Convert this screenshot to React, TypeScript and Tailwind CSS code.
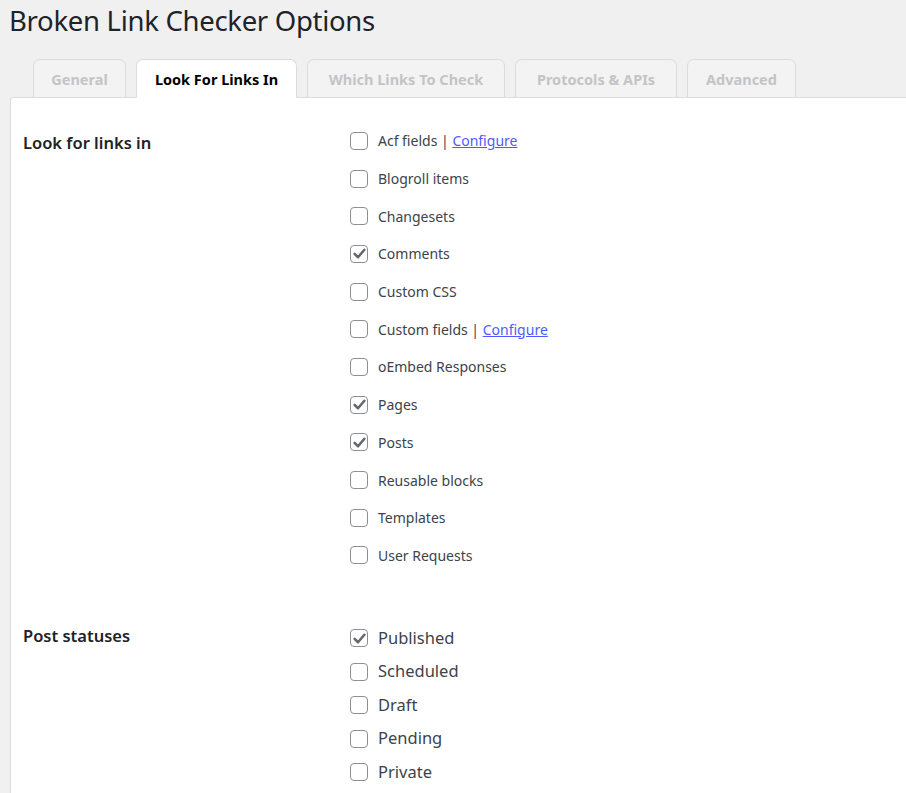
import React from "react";

type Item = { label: string; checked?: boolean; configure?: boolean };

const linkSources: Item[] = [
  { label: "Acf fields", configure: true },
  { label: "Blogroll items" },
  { label: "Changesets" },
  { label: "Comments", checked: true },
  { label: "Custom CSS" },
  { label: "Custom fields", configure: true },
  { label: "oEmbed Responses" },
  { label: "Pages", checked: true },
  { label: "Posts", checked: true },
  { label: "Reusable blocks" },
  { label: "Templates" },
  { label: "User Requests" },
];

const statuses: Item[] = [
  { label: "Published", checked: true },
  { label: "Scheduled" },
  { label: "Draft" },
  { label: "Pending" },
  { label: "Private" },
];

const tabs = [
  { name: "General", w: "w-[93px]" },
  { name: "Look For Links In", w: "w-[161px]", active: true },
  { name: "Which Links To Check", w: "w-[198px]" },
  { name: "Protocols & APIs", w: "w-[162px]" },
  { name: "Advanced", w: "w-[109px]" },
];

function Checkbox({ checked }: { checked?: boolean }) {
  return (
    <span className="w-[18px] h-[18px] shrink-0 rounded-[4px] border border-[#8c8f94] bg-white flex items-center justify-center">
      {checked && (
        <svg width="15" height="15" viewBox="0 0 20 20">
          <path
            d="M3.5 10.5l4.5 4.5 8.5-10"
            fill="none"
            stroke="#64686d"
            strokeWidth="3.4"
            strokeLinecap="round"
            strokeLinejoin="round"
          />
        </svg>
      )}
    </span>
  );
}

export default function App() {
  return (
    <div
      className="min-h-[793px] bg-[#f0f0f1] text-[#1d2327] overflow-hidden"
      style={{ fontFamily: '"Noto Sans", "Open Sans", sans-serif' }}
    >
      <h1 className="pl-[9px] pt-[2px] text-[27.5px] leading-[38px] font-normal text-[#1d2327] tracking-[-0.3px]">
        Broken Link Checker Options
      </h1>

      <div className="flex gap-[10px] pl-[33px] mt-[19px] relative z-10">
        {tabs.map((t) => (
          <div
            key={t.name}
            className={`${t.w} h-[39px] -mb-px pt-[3px] flex items-center justify-center rounded-t-[7px] border text-[14.5px] font-bold ${
              t.active
                ? "bg-white border-[#dcdcde] border-b-white text-black"
                : "bg-[#f3f3f3] border-[#dcdcde] text-[#c3c4c7]"
            }`}
          >
            {t.name}
          </div>
        ))}
      </div>

      <div className="ml-[10px] bg-white border-l border-t border-[#dcdcde] rounded-tl-[4px] min-h-[700px] pt-[24px]">
        <div className="flex">
          <div className="w-[339px] pl-[12px] pt-[10px] text-[16.5px] font-semibold text-[#1d2327] leading-[22px]">
            Look for links in
          </div>
          <div className="flex flex-col">
            {linkSources.map((it) => (
              <div key={it.label} className="h-[37.7px] flex items-center gap-[10px] text-[14px] text-[#3c434a]">
                <Checkbox checked={it.checked} />
                <span>
                  {it.label}
                  {it.configure && (
                    <>
                      {" | "}
                      <a href="#" className="text-[#4f5bff] underline">
                        Configure
                      </a>
                    </>
                  )}
                </span>
              </div>
            ))}
          </div>
        </div>

        <div className="flex mt-[47px]">
          <div className="w-[339px] pl-[12px] pt-[4px] text-[16.5px] font-semibold text-[#1d2327] leading-[22px]">
            Post statuses
          </div>
          <div className="flex flex-col">
            {statuses.map((it) => (
              <div key={it.label} className="h-[33.5px] flex items-center gap-[10px] text-[16.5px] text-[#3c434a]">
                <Checkbox checked={it.checked} />
                <span>{it.label}</span>
              </div>
            ))}
          </div>
        </div>
      </div>
    </div>
  );
}
